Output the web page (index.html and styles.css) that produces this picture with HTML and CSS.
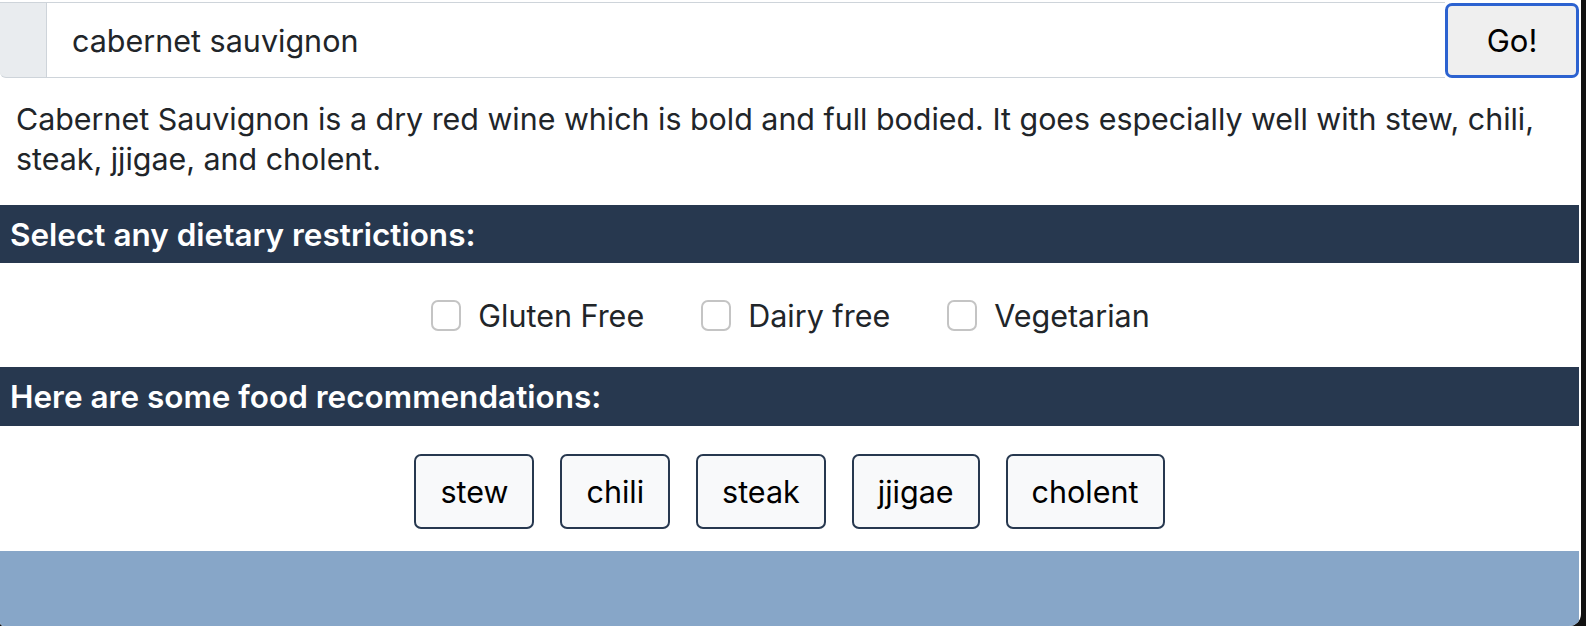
FILE: index.html
```html
<!DOCTYPE html>
<html lang="en">
<head>
<meta charset="utf-8">
<title>Wine pairing</title>
<link rel="stylesheet" href="styles.css">
</head>
<body>
<div class="app">
  <form class="search">
    <span class="prepend"></span>
    <input class="search-input" type="text" value="cabernet sauvignon">
    <button class="go" type="button">Go!</button>
  </form>
  <p class="desc">Cabernet Sauvignon is a dry red wine which is bold and full bodied. It goes especially well with stew, chili, steak, jjigae, and cholent.</p>
  <h2 class="bar">Select any dietary restrictions:</h2>
  <div class="checks">
    <label class="check"><input type="checkbox" class="box">Gluten Free</label>
    <label class="check"><input type="checkbox" class="box">Dairy free</label>
    <label class="check"><input type="checkbox" class="box">Vegetarian</label>
  </div>
  <h2 class="bar">Here are some food recommendations:</h2>
  <div class="foods">
    <button class="food" type="button">stew</button>
    <button class="food" type="button">chili</button>
    <button class="food" type="button">steak</button>
    <button class="food" type="button">jjigae</button>
    <button class="food" type="button">cholent</button>
  </div>
  <div class="footer"></div>
</div>
</body>
</html>
```

FILE: styles.css
```css
* { box-sizing: border-box; }
html, body { margin: 0; padding: 0; }
body {
  background: #111;
  font-family: Inter, "Noto Sans", sans-serif;
  color: #212529;
  height: 626px;
  overflow: hidden;
}
.app {
  width: 1581px;
  height: 626px;
  background: #fff;
  padding-top: 2px;
  padding-right: 2px;
  display: flex;
  flex-direction: column;
  border-bottom-right-radius: 12px;
  border-bottom-left-radius: 4px;
  overflow: hidden;
}
.search {
  display: flex;
  height: 76px;
  margin: 0;
}
.prepend {
  width: 47px;
  background: #e9ecef;
  border: 1px solid #ced4da;
  border-left: none;
  border-radius: 0 0 0 6px;
}
.search-input {
  flex: 1;
  border: 1px solid #ced4da;
  border-left: none;
  border-right: none;
  padding: 0 0 0 25px;
  font-family: Inter, "Noto Sans", sans-serif;
  font-size: 30.5px;
  color: #212529;
  outline: none;
  background: #fff;
}
.go {
  width: 134px;
  margin-top: 1px;
  height: 75px;
  background: #efefef;
  border: 3px solid #2c62d0;
  border-radius: 7px;
  font-family: Inter, "Noto Sans", sans-serif;
  font-size: 31px;
  color: #000;
  padding: 0;
}
.desc {
  margin: 21px 0 0 16px;
  font-size: 30.4px;
  line-height: 40px;
  color: #212529;
  padding-right: 6px;
}
.bar {
  margin: 0;
  background: #27384f;
  color: #fff;
  font-size: 31.5px;
  font-weight: 600;
  padding-left: 10px;
  display: flex;
  align-items: center;
}
.desc + .bar { margin-top: 26px; height: 58px; }
.checks + .bar { height: 59px; }
.checks {
  height: 104px;
  display: flex;
  justify-content: center;
  align-items: center;
  gap: 57px;
  padding-left: 2px;
}
.check {
  display: flex;
  align-items: center;
  gap: 17px;
  font-size: 30.5px;
  color: #212529;
}
.box {
  appearance: none;
  -webkit-appearance: none;
  width: 30px;
  height: 31px;
  margin: 0;
  border: 2px solid #c4c4c4;
  border-radius: 7px;
  background: #fff;
}
.foods {
  height: 125px;
  display: flex;
  justify-content: center;
  align-items: center;
  gap: 26px;
  padding-top: 5px;
}
.food {
  height: 75px;
  padding: 0 24px;
  background: #f8f9fa;
  border: 2px solid #27384f;
  border-radius: 7px;
  font-family: Inter, "Noto Sans", sans-serif;
  font-size: 30.5px;
  color: #000;
}
.footer {
  flex: 1;
  background: #87a6c8;
}
```
